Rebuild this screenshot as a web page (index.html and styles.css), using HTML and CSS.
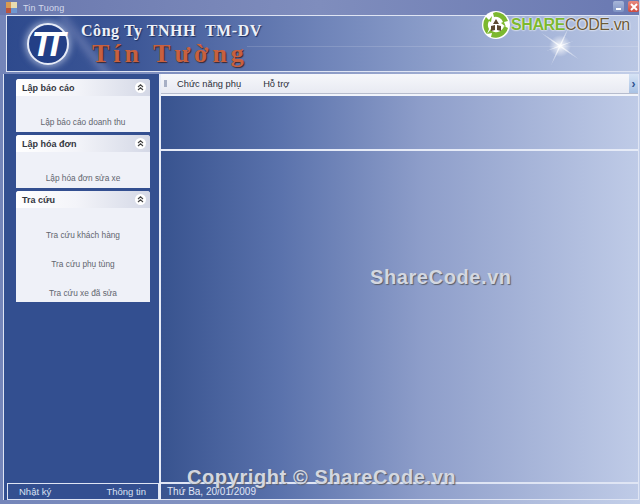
FILE: index.html
```html
<!DOCTYPE html>
<html lang="vi">
<head>
  <meta charset="UTF-8">
  <title>Tin Tuong</title>
  <link rel="stylesheet" href="styles.css">
</head>
<body>
  <div class="window">
    <div class="titlebar">
      <svg class="app-icon" width="13" height="13" viewBox="0 0 13 13">
        <rect x="1" y="1" width="6" height="6" fill="#d99a52"/>
        <rect x="6" y="1" width="6" height="6" fill="#e8dcb0"/>
        <rect x="1" y="7" width="6" height="5" fill="#b9543f"/>
        <rect x="6" y="7" width="6" height="5" fill="#6f96cf"/>
      </svg>
      <span class="title-text">Tin Tuong</span>
      <div class="win-buttons">
        <div class="win-btn min"><span class="min-bar"></span></div>
        <div class="win-btn close">
          <svg width="10" height="10" viewBox="0 0 10 10"><path d="M2 2 L8 8 M8 2 L2 8" stroke="#fff" stroke-width="2"/></svg>
        </div>
      </div>
    </div>

    <header class="banner">
      <div class="streak"></div>
      <div class="hline"></div>
      <div class="logo-circle"><span class="logo-tt">TT</span></div>
      <div class="company">
        <div class="company-top">Công Ty TNHH&nbsp; TM-DV</div>
        <div class="company-name">Tín Tường</div>
      </div>
      <svg class="flare" width="64" height="54" viewBox="0 0 64 54">
        <defs>
          <radialGradient id="glow">
            <stop offset="0" stop-color="#fff"/>
            <stop offset="0.35" stop-color="#fff" stop-opacity="0.6"/>
            <stop offset="1" stop-color="#fff" stop-opacity="0"/>
          </radialGradient>
        </defs>
        <circle cx="32" cy="30" r="11" fill="url(#glow)"/>
        <ellipse cx="32" cy="30" rx="1.2" ry="22" fill="url(#glow)" transform="rotate(25 32 30)"/>
        <ellipse cx="32" cy="30" rx="1.2" ry="24" fill="url(#glow)" transform="rotate(-55 32 30)"/>
        <ellipse cx="32" cy="30" rx="1" ry="15" fill="url(#glow)" transform="rotate(70 32 30)"/>
      </svg>
    </header>

    <div class="content">
      <aside class="sidebar">
        <div class="panels">
          <section class="panel">
            <div class="panel-head">
              <span>Lập báo cáo</span>
              <svg class="collapse" width="11" height="11" viewBox="0 0 11 11"><circle cx="5.5" cy="5.5" r="5.5" fill="#fff"/><path d="M3 5 L5.5 2.8 L8 5 M3 8 L5.5 5.8 L8 8" fill="none" stroke="#444" stroke-width="1.1"/></svg>
            </div>
            <div class="panel-body one">
              <a>Lập báo cáo doanh thu</a>
            </div>
          </section>
          <section class="panel">
            <div class="panel-head">
              <span>Lập hóa đơn</span>
              <svg class="collapse" width="11" height="11" viewBox="0 0 11 11"><circle cx="5.5" cy="5.5" r="5.5" fill="#fff"/><path d="M3 5 L5.5 2.8 L8 5 M3 8 L5.5 5.8 L8 8" fill="none" stroke="#444" stroke-width="1.1"/></svg>
            </div>
            <div class="panel-body one">
              <a>Lập hóa đơn sửa xe</a>
            </div>
          </section>
          <section class="panel">
            <div class="panel-head">
              <span>Tra cứu</span>
              <svg class="collapse" width="11" height="11" viewBox="0 0 11 11"><circle cx="5.5" cy="5.5" r="5.5" fill="#fff"/><path d="M3 5 L5.5 2.8 L8 5 M3 8 L5.5 5.8 L8 8" fill="none" stroke="#444" stroke-width="1.1"/></svg>
            </div>
            <div class="panel-body three">
              <a>Tra cứu khách hàng</a>
              <a>Tra cứu phụ tùng</a>
              <a>Tra cứu xe đã sửa</a>
            </div>
          </section>
        </div>
        <div class="side-footer">
          <span>Nhật ký</span>
          <span>Thông tin</span>
        </div>
      </aside>

      <main class="main">
        <div class="menubar">
          <div class="grip"></div>
          <span class="menu-item first">Chức năng phụ</span>
          <span class="menu-item">Hỗ trợ</span>
          <div class="overflow">&#8250;</div>
        </div>
        <div class="tool-area"></div>
        <div class="workspace"></div>
        <div class="statusbar">Thứ Ba, 20/01/2009</div>
      </main>
    </div>
  </div>

  <!-- watermark -->
  <div class="sc-logo">
    <svg width="30" height="30" viewBox="0 0 30 30">
      <circle cx="15" cy="15" r="14" fill="#fff"/>
      <path d="M15 2 A13 13 0 0 1 27 11 L23 12 L25 17 L20 13 L22 12 A8 8 0 0 0 13 7 L12 3 Z" fill="#7cb82f"/>
      <path d="M27 18 A13 13 0 0 1 10 27 L11 23 L6 24 L10 19 L11 21 A8 8 0 0 0 23 16 Z" fill="#7cb82f"/>
      <path d="M6 24 A13 13 0 0 1 5 7 L8 10 L11 6 L10 12 L8 11 A8 8 0 0 0 8 19 Z" fill="#7cb82f"/>
      <path d="M15 9 L18 14 L12 14 Z M10 16 L14 15 L14 20 L10 21 Z M16 15 L20 16 L20 21 L16 20 Z" fill="#5d4a32"/>
    </svg>
    <span class="sc-share">SHARE</span><span class="sc-code">CODE</span><span class="sc-vn">.vn</span>
  </div>
  <div class="mark mark-mid">ShareCode.vn</div>
  <div class="mark mark-bottom">Copyright © ShareCode.vn</div>
</body>
</html>
```

FILE: styles.css
```css
html, body {
  margin: 0;
  padding: 0;
}

body {
  width: 640px;
  height: 504px;
  position: relative;
  overflow: hidden;
  font-family: "Liberation Sans", Tahoma, sans-serif;
  background: #6f80b6;
}

.window {
  display: flex;
  flex-direction: column;
  width: 640px;
  height: 504px;
  box-sizing: border-box;
  padding: 0 1px 4px 3px;
  background: linear-gradient(90deg, #7485b9 0%, #8b9ac6 50%, #c3cfe9 100%);
}

/* title bar */
.titlebar {
  display: flex;
  align-items: center;
  height: 15px;
  flex: none;
  margin-left: -3px;
  padding-left: 5px;
  background: linear-gradient(90deg, #6a78ae, #7f8dbd 50%, #6a79b2);
}

.title-text {
  margin-left: 5px;
  font-size: 9px;
  color: #d5daec;
  letter-spacing: 0.2px;
}

.win-buttons {
  display: flex;
  gap: 4px;
  margin-left: auto;
  margin-right: 0;
  align-self: flex-start;
  padding-top: 1px;
}

.win-btn {
  display: flex;
  align-items: center;
  justify-content: center;
  width: 11px;
  height: 11px;
  border-radius: 2px;
}

.min {
  background: linear-gradient(#a8b6d8, #7f93c4);
}

.min-bar {
  width: 5px;
  height: 2px;
  margin-top: 5px;
  background: #fff;
}

.close {
  background: linear-gradient(#e88a80, #cf4a3f);
}

/* banner */
.banner {
  position: relative;
  display: flex;
  align-items: center;
  flex: none;
  height: 55px;
  margin: 0 0 2px 3px;
  border: 1px solid #dfe5f4;
  overflow: hidden;
  background: linear-gradient(90deg, #2e4a8d 0%, #3d5797 20%, #6f84b9 50%, #a0b0d6 80%, #bac7e4 100%);
}

.streak {
  position: absolute;
  left: 78px;
  top: -10px;
  width: 8px;
  height: 90px;
  background: rgba(220, 215, 240, 0.22);
  filter: blur(3px);
  transform: rotate(-38deg);
}

.hline {
  position: absolute;
  left: 240px;
  right: 0;
  top: 30px;
  height: 1px;
  background: rgba(255, 255, 255, 0.14);
}

.logo-circle {
  display: flex;
  align-items: center;
  justify-content: center;
  position: relative;
  flex: none;
  width: 38px;
  height: 38px;
  margin-left: 20px;
  border-radius: 50%;
  background: #233f86;
  border: 2px solid #e6ebf7;
  box-shadow: 0 0 6px 2px rgba(220, 228, 245, 0.55);
}

.logo-tt {
  font-family: "Liberation Sans", sans-serif;
  font-size: 35px;
  font-weight: bold;
  font-style: italic;
  letter-spacing: -9px;
  color: #fff;
  margin-left: -8px;
}

.company {
  position: relative;
  margin-left: 12px;
  padding-top: 3px;
  font-family: "Liberation Serif", serif;
  font-weight: bold;
}

.company-top {
  font-size: 16px;
  line-height: 18px;
  letter-spacing: 0.55px;
  color: #eef1f8;
  white-space: nowrap;
  text-shadow: 1px 1px 1px #1c2f60;
}

.company-name {
  margin-left: 11px;
  font-size: 26px;
  line-height: 28px;
  letter-spacing: 4px;
  color: #c8603f;
  white-space: nowrap;
  text-shadow: 1px 1px 1px #3a2730;
}

.flare {
  position: absolute;
  left: 521px;
  top: 0;
}

/* body */
.content {
  display: flex;
  flex: 1;
  min-height: 0;
}

.sidebar {
  display: flex;
  flex-direction: column;
  width: 155px;
  flex: none;
  border-left: 1px solid #dfe5f4;
  background: #334f90;
}

.panels {
  display: flex;
  flex-direction: column;
  flex: 1;
  gap: 3px;
  padding: 5px 9px 0 12px;
}

.panel {
  border-radius: 3px 3px 0 0;
  overflow: hidden;
  background: #eff1f8;
}

.panel-head {
  display: flex;
  align-items: center;
  justify-content: space-between;
  height: 17px;
  padding: 0 4px 0 6px;
  font-size: 9px;
  font-weight: bold;
  color: #33363f;
  background: linear-gradient(90deg, #ffffff 0%, #f3f4f9 45%, #d4d8e6 100%);
}

.panel-body {
  display: flex;
  flex-direction: column;
  align-items: center;
  font-size: 8.3px;
  color: #62666f;
}

.panel-body.one {
  height: 36px;
  justify-content: flex-end;
}

.panel-body.one a {
  padding-bottom: 5px;
}

.panel-body.three {
  height: 94px;
  gap: 19px;
  padding-top: 22px;
  box-sizing: border-box;
}

.side-footer {
  display: flex;
  justify-content: space-between;
  align-items: center;
  height: 15px;
  margin-left: 3px;
  padding: 0 12px 0 11px;
  border: 1px solid #dfe5f4;
  font-size: 9.5px;
  color: #d9e0f2;
}

.main {
  display: flex;
  flex-direction: column;
  flex: 1;
  min-width: 0;
  border-left: 2px solid #e6ebf7;
  border-right: 1px solid #dfe5f4;
  background: linear-gradient(90deg, #38538f 0%, #5a72ac 25%, #8e9eca 55%, #bfcbe7 100%);
}

.menubar {
  display: flex;
  align-items: center;
  flex: none;
  height: 19px;
  font-size: 9.3px;
  color: #2c2f3a;
  background: linear-gradient(#f6f7fb, #e8eaf2);
  border-bottom: 1px solid #b6bccd;
}

.grip {
  width: 3px;
  height: 7px;
  margin-left: 3px;
  background: #a8b0c5;
}

.menu-item.first {
  margin-left: 10px;
}

.menu-item {
  margin-right: 22px;
}

.overflow {
  display: flex;
  align-items: center;
  justify-content: center;
  width: 9px;
  height: 100%;
  margin-left: auto;
  font-size: 12px;
  font-weight: bold;
  color: #2d4f8f;
  background: linear-gradient(#d6e3f5, #a9c2e4);
}

.tool-area {
  flex: none;
  height: 53px;
  border-top: 2px solid #f1f4fb;
  border-bottom: 2px solid #e6ebf7;
}

.workspace {
  flex: 1;
}

.statusbar {
  flex: none;
  height: 15px;
  padding-left: 6px;
  border-top: 2px solid #dfe5f4;
  border-bottom: 1px solid #dfe5f4;
  font-size: 10px;
  line-height: 15px;
  color: #e0e6f5;
}

/* watermarks over the page */
.sc-logo {
  position: absolute;
  left: 481px;
  top: 10px;
  display: flex;
  align-items: center;
  font-family: "Liberation Sans", sans-serif;
  font-size: 16px;
  letter-spacing: -0.4px;
  text-shadow: 0 0 2px #fff, 0 0 2px #fff;
}

.sc-share {
  font-weight: bold;
  color: #7cb82f;
}

.sc-code {
  color: #6b5a38;
}

.sc-vn {
  color: #6b5a38;
}

.mark {
  position: absolute;
  font-weight: bold;
  font-size: 20px;
  letter-spacing: 0.6px;
  color: #d3d7e0;
  white-space: nowrap;
  text-shadow: 1px 1px 1px #5a5f6c;
}

.mark-mid {
  left: 370px;
  top: 266px;
}

.mark-bottom {
  left: 187px;
  top: 466px;
}
```
